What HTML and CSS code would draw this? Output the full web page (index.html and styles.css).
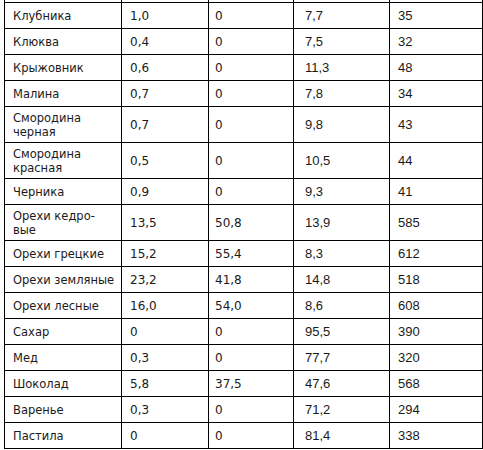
FILE: index.html
```html
<!DOCTYPE html>
<html lang="ru">
<head>
<meta charset="utf-8">
<title>Таблица</title>
<link rel="stylesheet" href="styles.css">
</head>
<body>
<table class="tbl">
  <colgroup>
    <col class="c1"><col class="c2"><col class="c3"><col class="c4"><col class="c5">
  </colgroup>
  <tr class="cut"><td></td><td></td><td></td><td></td><td></td></tr>
  <tr class="r"><td class="n">Клубника</td><td class="d">1,0</td><td class="d">0</td><td class="a">7,7</td><td class="a">35</td></tr>
  <tr class="r"><td class="n">Клюква</td><td class="d">0,4</td><td class="d">0</td><td class="a">7,5</td><td class="a">32</td></tr>
  <tr class="r"><td class="n">Крыжовник</td><td class="d">0,6</td><td class="d">0</td><td class="a">11,3</td><td class="a">48</td></tr>
  <tr class="r"><td class="n">Малина</td><td class="d">0,7</td><td class="d">0</td><td class="a">7,8</td><td class="a">34</td></tr>
  <tr class="rr"><td class="n">Смородина<br>черная</td><td class="d">0,7</td><td class="d">0</td><td class="a">9,8</td><td class="a">43</td></tr>
  <tr class="rr"><td class="n">Смородина<br>красная</td><td class="d">0,5</td><td class="d">0</td><td class="a">10,5</td><td class="a">44</td></tr>
  <tr class="r"><td class="n">Черника</td><td class="d">0,9</td><td class="d">0</td><td class="a">9,3</td><td class="a">41</td></tr>
  <tr class="rr"><td class="n">Орехи кедро-<br>вые</td><td class="d">13,5</td><td class="d">50,8</td><td class="a">13,9</td><td class="a">585</td></tr>
  <tr class="r"><td class="n">Орехи грецкие</td><td class="d">15,2</td><td class="d">55,4</td><td class="a">8,3</td><td class="a">612</td></tr>
  <tr class="r"><td class="n">Орехи земляные</td><td class="d">23,2</td><td class="d">41,8</td><td class="a">14,8</td><td class="a">518</td></tr>
  <tr class="r"><td class="n">Орехи лесные</td><td class="d">16,0</td><td class="d">54,0</td><td class="a">8,6</td><td class="a">608</td></tr>
  <tr class="r"><td class="n">Сахар</td><td class="d">0</td><td class="d">0</td><td class="a">95,5</td><td class="a">390</td></tr>
  <tr class="r"><td class="n">Мед</td><td class="d">0,3</td><td class="d">0</td><td class="a">77,7</td><td class="a">320</td></tr>
  <tr class="r"><td class="n">Шоколад</td><td class="d">5,8</td><td class="d">37,5</td><td class="a">47,6</td><td class="a">568</td></tr>
  <tr class="r"><td class="n">Варенье</td><td class="d">0,3</td><td class="d">0</td><td class="a">71,2</td><td class="a">294</td></tr>
  <tr class="r"><td class="n">Пастила</td><td class="d">0</td><td class="d">0</td><td class="a">81,4</td><td class="a">338</td></tr>
</table>
</body>
</html>
```
FILE: styles.css
```css
html, body {
  margin: 0;
  padding: 0;
  background: #fff;
}
body {
  padding-left: 4px;
}
.tbl {
  border-collapse: collapse;
  table-layout: fixed;
  width: 478px;
  color: #1a1a1a;
}
.c1 { width: 117px; }
.c2 { width: 87px; }
.c3 { width: 85px; }
.c4 { width: 96px; }
.c5 { width: 93px; }
.tbl td {
  border: 1px solid #000;
  padding: 0 2px 0 8px;
  vertical-align: middle;
  overflow: hidden;
  white-space: nowrap;
}
.tbl tr.cut td {
  height: 2px;
  border-top: none;
  padding: 0;
}
.tbl tr.r td {
  height: 25px;
}
.tbl tr.rr td {
  height: 35px;
}
.n, .d {
  font-family: "DejaVu Sans", sans-serif;
  font-size: 11.5px;
  line-height: 14px;
}
.d {
  padding-left: 8px;
  font-size: 12px;
}
.a {
  font-family: "Liberation Sans", Arial, sans-serif;
  font-size: 13px;
  line-height: 14px;
}
.tbl td.a:nth-child(4) {
  padding-left: 11px;
}
.tbl td.d:nth-child(3) {
  padding-left: 6px;
}
```
